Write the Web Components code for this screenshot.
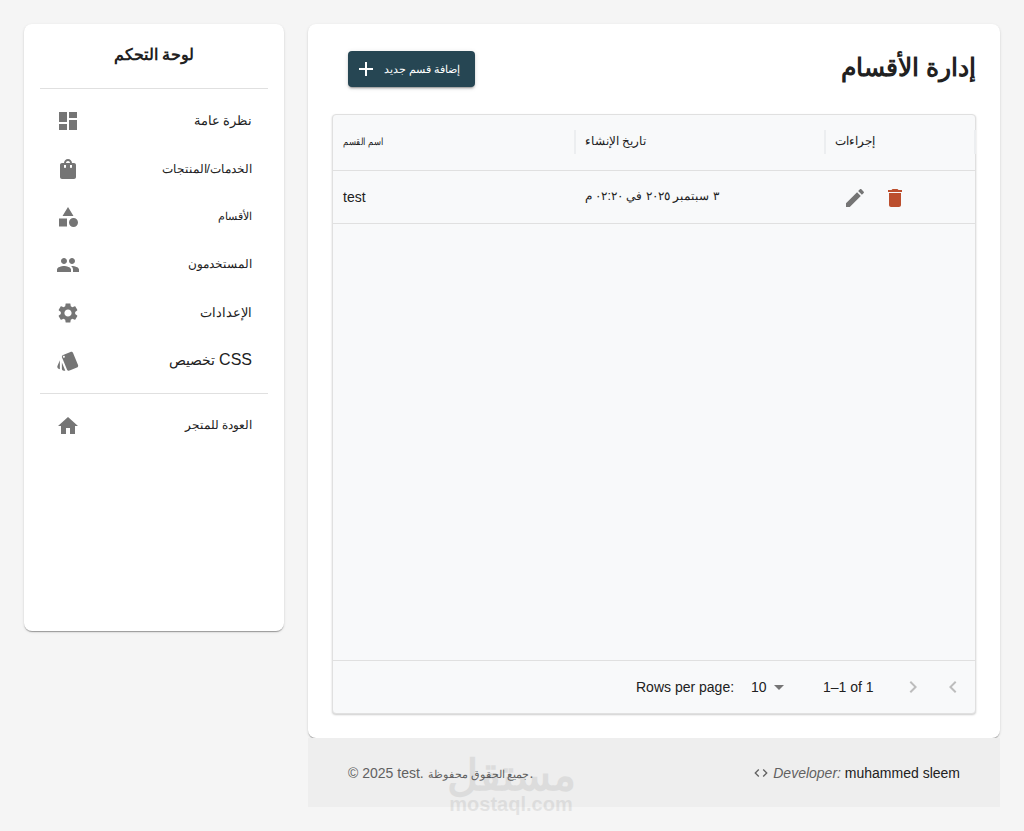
<!DOCTYPE html>
<html lang="ar">
<head>
<meta charset="utf-8">
<title>إدارة الأقسام</title>
<style>
html,body{margin:0;padding:0;background:#f5f5f5;}
body{font-family:"Liberation Sans",Arial,sans-serif;color:#212121;height:831px;overflow:hidden;}
</style>
</head>
<body>
<admin-shell>
  <side-panel slot="side" heading="لوحة التحكم">
    <nav-row icon="dashboard" fs="12.6">نظرة عامة</nav-row>
    <nav-row icon="bag" fs="12.4">الخدمات/المنتجات</nav-row>
    <nav-row icon="category" fs="11">الأقسام</nav-row>
    <nav-row icon="people" fs="11.8">المستخدمون</nav-row>
    <nav-row icon="settings" fs="12.7">الإعدادات</nav-row>
    <nav-row icon="style" fs="14"><span style="font-size:16px">CSS</span> تخصيص</nav-row>
    <hr-line></hr-line>
    <nav-row icon="home" fs="12">العودة للمتجر</nav-row>
  </side-panel>
  <main-card slot="main" heading="إدارة الأقسام" action="إضافة قسم جديد">
    <data-grid></data-grid>
  </main-card>
  <page-footer slot="main"></page-footer>
</admin-shell>
<script>
const ICONS={
dashboard:'M3 13h8V3H3zm0 8h8v-6H3zm10 0h8V11h-8zm0-18v6h8V3z',
bag:'M18 6h-2c0-2.21-1.79-4-4-4S8 3.79 8 6H6c-1.1 0-2 .9-2 2v12c0 1.1.9 2 2 2h12c1.1 0 2-.9 2-2V8c0-1.1-.9-2-2-2zm-8 4c0 .55-.45 1-1 1s-1-.45-1-1V8h2v2zm2-6c1.1 0 2 .9 2 2h-4c0-1.1.9-2 2-2zm4 6c0 .55-.45 1-1 1s-1-.45-1-1V8h2v2z',
category:'M12 2l-5.5 9h11L12 2zM17.5 13a4.5 4.5 0 1 0 0 9 4.5 4.5 0 0 0 0-9zM3 13.5h8v8H3z',
people:'M16 11c1.66 0 2.99-1.34 2.99-3S17.66 5 16 5c-1.66 0-3 1.34-3 3s1.34 3 3 3zm-8 0c1.66 0 2.99-1.34 2.99-3S9.66 5 8 5C6.34 5 5 6.34 5 8s1.34 3 3 3zm0 2c-2.33 0-7 1.17-7 3.5V19h14v-2.5c0-2.33-4.67-3.5-7-3.5zm8 0c-.29 0-.62.02-.97.05 1.16.84 1.97 1.97 1.97 3.45V19h6v-2.5c0-2.33-4.67-3.5-7-3.5z',
settings:'M19.14 12.94c.04-.3.06-.61.06-.94 0-.32-.02-.64-.07-.94l2.03-1.58c.18-.14.23-.41.12-.61l-1.92-3.32c-.12-.22-.37-.29-.59-.22l-2.39.96c-.5-.38-1.03-.7-1.62-.94l-.36-2.54c-.04-.24-.24-.41-.48-.41h-3.84c-.24 0-.43.17-.47.41l-.36 2.54c-.59.24-1.13.57-1.62.94l-2.39-.96c-.22-.08-.47 0-.59.22L2.74 8.87c-.12.21-.08.47.12.61l2.03 1.58c-.05.3-.09.63-.09.94s.02.64.07.94l-2.03 1.58c-.18.14-.23.41-.12.61l1.92 3.32c.12.22.37.29.59.22l2.39-.96c.5.38 1.03.7 1.62.94l.36 2.54c.05.24.24.41.48.41h3.84c.24 0 .44-.17.47-.41l.36-2.54c.59-.24 1.13-.56 1.62-.94l2.39.96c.22.08.47 0 .59-.22l1.92-3.32c.12-.22.07-.47-.12-.61l-2.01-1.58zM12 15.6c-1.98 0-3.6-1.62-3.6-3.6s1.62-3.6 3.6-3.6 3.6 1.62 3.6 3.6-1.62 3.6-3.6 3.6z',
style:'M2.53 19.65l1.34.56v-9.03l-2.43 5.86c-.41 1.02.08 2.19 1.09 2.61zm19.5-3.7L17.07 3.98c-.31-.75-1.04-1.21-1.81-1.23-.26 0-.53.04-.79.15L7.1 5.95c-.75.31-1.21 1.03-1.23 1.8-.01.27.04.54.15.8l4.96 11.97c.31.76 1.05 1.22 1.83 1.23.26 0 .52-.05.77-.15l7.36-3.05c1.02-.42 1.51-1.59 1.09-2.6zM7.88 8.75c-.55 0-1-.45-1-1s.45-1 1-1 1 .45 1 1-.45 1-1 1zm-2 11c0 1.1.9 2 2 2h1.45l-3.45-8.34v6.34z',
home:'M10 20v-6h4v6h5v-8h3L12 3 2 12h3v8z',
edit:'M3 17.25V21h3.75L17.81 9.94l-3.75-3.75L3 17.25zM20.71 7.04c.39-.39.39-1.02 0-1.41l-2.34-2.34c-.39-.39-1.02-.39-1.41 0l-1.83 1.83 3.75 3.75 1.83-1.83z',
del:'M6 19c0 1.1.9 2 2 2h8c1.1 0 2-.9 2-2V7H6v12zM19 4h-3.5l-1-1h-5l-1 1H5v2h14V4z',
add:'M19 13h-6v6h-2v-6H5v-2h6V5h2v6h6v2z',
code:'M9.4 16.6 4.8 12l4.6-4.6L8 6l-6 6 6 6 1.4-1.4zm5.2 0 4.6-4.6-4.6-4.6L16 6l6 6-6 6-1.4-1.4z',
drop:'M7 10l5 5 5-5z',
next:'M10 6 8.59 7.41 13.17 12l-4.58 4.59L10 18l6-6z',
prev:'M15.41 7.41 14 6l-6 6 6 6 1.41-1.41L10.83 12z'
};
function svg(name,size,color){
  return `<svg width="${size}" height="${size}" viewBox="0 0 24 24" fill="${color}" style="display:block;flex:none" aria-hidden="true"><path d="${ICONS[name]}"/></svg>`;
}
function def(tag,render){
  customElements.define(tag,class extends HTMLElement{
    constructor(){super();this.attachShadow({mode:'open'});}
    connectedCallback(){this.shadowRoot.innerHTML=render(this);}
  });
}
def('admin-shell',()=>`<style>
:host{display:flex;gap:24px;padding:24px;align-items:flex-start;box-sizing:border-box;width:1024px;}
.side{flex:none;width:260px;display:block}
.main{flex:1;min-width:0;display:flex;flex-direction:column}
</style><div class="side"><slot name="side"></slot></div><div class="main"><slot name="main"></slot></div>`);
def('side-panel',e=>`<style>
:host{display:block;height:607px;box-sizing:border-box;padding:16px;background:#fff;border-radius:8px;box-shadow:0 2px 1px -1px rgba(0,0,0,.2),0 1px 1px 0 rgba(0,0,0,.14),0 1px 3px 0 rgba(0,0,0,.12);}
h2{margin:0;font-size:15.5px;font-weight:700;line-height:30px;text-align:center;color:#212121;padding-bottom:18px;border-bottom:1px solid #e0e0e0;}
nav{padding-top:8px;display:block}
</style><h2 dir="rtl">${e.getAttribute('heading')}</h2><nav><slot></slot></nav>`);
def('nav-row',e=>`<style>
:host{display:flex;direction:rtl;align-items:center;justify-content:space-between;height:48px;padding:0 16px;font-size:${e.getAttribute('fs')}px;color:#212121;}
.t{padding-bottom:2px}
</style><span class="t"><slot></slot></span><span>${svg(e.getAttribute('icon'),24,'#757575')}</span>`);
def('hr-line',()=>`<style>:host{display:block;height:1px;background:#e0e0e0;margin:8px 0;}</style>`);
def('main-card',e=>`<style>
:host{display:block;background:#fff;padding:24px;border-radius:8px;height:714px;box-sizing:border-box;box-shadow:0 2px 1px -1px rgba(0,0,0,.2),0 1px 1px 0 rgba(0,0,0,.14),0 1px 3px 0 rgba(0,0,0,.12);}
header{display:flex;align-items:center;justify-content:space-between;height:42px;margin-bottom:24px;}
h1{margin:0 0 3px;font-size:25.4px;font-weight:700;line-height:39px;color:#212121;}
button{margin-left:16px;display:flex;direction:rtl;align-items:center;gap:6px;width:127px;height:36px;box-sizing:border-box;padding:0 15px 0 10px;border:0;border-radius:4px;background:#264653;color:#fff;font:10.6px "Liberation Sans",Arial,sans-serif;white-space:nowrap;box-shadow:0 3px 1px -2px rgba(0,0,0,.2),0 2px 2px 0 rgba(0,0,0,.14),0 1px 5px 0 rgba(0,0,0,.12);}
</style><header><button type="button"><span>${e.getAttribute('action')}</span>${svg('add',24,'#fff')}</button><h1 dir="rtl">${e.getAttribute('heading')}</h1></header><slot></slot>`);
def('data-grid',()=>`<style>
:host{display:flex;flex-direction:column;height:600px;box-sizing:border-box;background:#f8f9fa;border:1px solid #e0e0e0;border-radius:4px;box-shadow:0 1px 2px rgba(0,0,0,.2);font-size:14px;color:#212121;}
.r{display:grid;grid-template-columns:242px 250px 150px;flex:none;border-bottom:1px solid #e0e0e0;}
.head{height:56px;box-sizing:border-box;font-size:11.5px;}
.body{height:53px;box-sizing:border-box;}
.c{display:flex;align-items:center;padding:0 10px;position:relative;min-width:0;}
.head .c{padding-bottom:3px;box-sizing:border-box}
.head .c::after{content:"";position:absolute;right:-1px;top:15px;height:24px;width:2px;background:#eceef0;}
.name{display:inline-block;font-size:10px;transform:scaleX(.84);transform-origin:left center;white-space:nowrap}
.date{font-size:12.4px;padding-bottom:3px;box-sizing:border-box}
.acts{gap:16px;padding-left:18px;padding-top:2px;box-sizing:border-box}
.fill{flex:1;}
.foot{flex:none;height:52px;border-top:1px solid #e0e0e0;display:flex;align-items:center;padding-left:303px;}
.lbl{width:115px;}
.sel{display:flex;align-items:center;width:72px;padding-bottom:1px}
.cnt{width:78px;}
.pg{display:flex;gap:16px;}
.pg span{display:flex;width:24px;justify-content:center}
</style>
<div class="r head"><div class="c"><span class="name">اسم القسم</span></div><div class="c">تاريخ الإنشاء</div><div class="c">إجراءات</div></div>
<div class="r body"><div class="c">test</div><div class="c date">٣ سبتمبر ٢٠٢٥ في ٠٢:٢٠ م</div><div class="c acts">${svg('edit',24,'#757575')}${svg('del',24,'#bc4f2e')}</div></div>
<div class="fill"></div>
<div class="foot"><span class="lbl">Rows per page:</span><span class="sel">10${svg('drop',24,'#757575')}</span><span class="cnt">1–1 of 1</span><span class="pg"><span>${svg('next',24,'#bdbdbd')}</span><span>${svg('prev',24,'#bdbdbd')}</span></span></div>`);
def('page-footer',()=>`<style>
:host{display:flex;position:relative;align-items:center;justify-content:space-between;height:69px;padding:0 40px;box-sizing:border-box;background:#eee;font-size:14px;color:#616161;}
.dev{display:flex;align-items:center;gap:4px;}
.ar{font-size:10.5px}
i{color:#616161}
b{font-weight:400;color:#212121}
.mark{position:absolute;left:139px;top:17px;width:126px;text-align:center;color:#000;opacity:.07;pointer-events:none;line-height:1;font-weight:700;white-space:nowrap}
.mark .a{display:block;font-size:43px;line-height:40px;}
.mark .b{display:block;font-size:20px;line-height:18px;margin-left:2px}
</style><span>© 2025 test. <span class="ar">جميع الحقوق محفوظة</span>.</span>
<span class="dev">${svg('code',16,'#616161')}<span><i>Developer:</i> <b>muhammed sleem</b></span></span>
<div class="mark"><span class="a">مستقل</span><span class="b">mostaql.com</span></div>`);
</script>
</body>
</html>
